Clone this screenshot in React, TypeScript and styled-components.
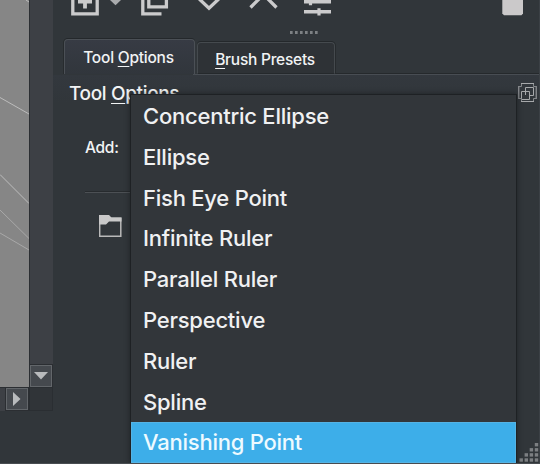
import React from "react";
import styled, { createGlobalStyle } from "styled-components";

const Global = createGlobalStyle`
  body { margin: 0; overflow: hidden; background: #31363b; }
  * { box-sizing: border-box; }
  svg { display: block; }
`;

const Window = styled.div`
  width: 540px;
  height: 464px;
  display: flex;
  position: relative;
  overflow: hidden;
  background: #31363a;
  border-bottom: 1px solid #484c50;
  color: #f1f3f4;
  font-family: Inter, "Liberation Sans", sans-serif;
`;

const CanvasColumn = styled.div`
  width: 53px;
  display: grid;
  grid-template-columns: 29px 24px;
  grid-template-rows: 387px 24px;
`;

const Canvas = styled.div`
  background: #868686;
`;

const VerticalBar = styled.div`
  background: #3d4045;
  border-left: 1px solid #2b2e32;
  display: flex;
  align-items: flex-end;
`;

const HorizontalBar = styled.div`
  background: #3d4045;
  border-top: 1px solid #2b2e32;
  display: flex;
  justify-content: flex-end;
  padding-right: 1px;
`;

const ScrollButton = styled.div`
  width: 22px;
  height: 22px;
  background: #45494e;
  border: 1px solid #62666a;
  outline: 1px solid #2b2e32;
  display: flex;
  align-items: center;
  justify-content: center;
`;

const Corner = styled.div`
  background: #303438;
  border: 1px solid #2a2e32;
`;

const Docker = styled.div`
  width: 487px;
  display: flex;
  flex-direction: column;
  border-right: 1px solid #3b4045;
`;

const Toolbar = styled.div`
  height: 30px;
`;

const Grip = styled.div`
  display: flex;
  gap: 2px;
  height: 9px;
  padding: 1px 0 0 237px;
`;

const Dot = styled.i`
  width: 3px;
  height: 3px;
  background: #7d8184;
  border-right: 1px solid #626669;
`;

const Tabs = styled.div`
  display: flex;
  align-items: flex-end;
  height: 35px;
  padding-left: 11px;
`;

const Tab = styled.div<{ $active?: boolean }>`
  width: ${(p) => (p.$active ? 131 : 138)}px;
  height: ${(p) => (p.$active ? 35 : 32)}px;
  margin-left: ${(p) => (p.$active ? 0 : 2)}px;
  padding: ${(p) => (p.$active ? 8 : 7)}px 2px 0 0;
  text-align: center;
  background: ${(p) => (p.$active ? "linear-gradient(#373b44, #31363c)" : "#2e3236")};
  border: 1px solid ${(p) => (p.$active ? "#4b5056" : "#454a4e")};
  border-bottom: ${(p) => (p.$active ? "0" : "1px solid #25292c")};
  border-radius: 4px 4px 0 0;
  box-shadow: 0 -1px 0 #24282b, ${(p) => (p.$active ? "-1px" : "1px")} 0 0 #272b2e;
  font-size: 15.5px;
  line-height: 19px;
  font-weight: 450;
  letter-spacing: ${(p) => (p.$active ? -0.23 : -0.25)}px;
  white-space: nowrap;
`;

const TabFill = styled.div`
  flex: 1;
  height: 1px;
  background: #25292c;
`;

const Key = styled.span`
  text-decoration: underline;
  text-decoration-thickness: 1px;
  text-underline-offset: 3px;
`;

const Panel = styled.div`
  flex: 1;
  display: grid;
  grid-template-rows: 37px 80px 70px 1fr;
  background: linear-gradient(#33383e, #31363a 28px);
  border-top: 1px solid #484d53;
  border-image: linear-gradient(90deg, transparent 140px, #484d53 140px) 1;
  border-left: 0;
  border-right: 0;
  border-bottom: 0;
`;

const Header = styled.div`
  display: flex;
  justify-content: space-between;
  padding: 7px 2px 0 16px;
`;

const Title = styled.div`
  font-size: 19px;
  line-height: 24px;
  font-weight: 450;
  letter-spacing: -0.35px;
  white-space: nowrap;
`;

const AddRow = styled.div`
  margin-left: 32px;
  padding-top: 26px;
  font-size: 15.5px;
  line-height: 20px;
  font-weight: 450;
  letter-spacing: -0.3px;
`;

const PresetRow = styled.div`
  margin: 0 60px 0 32px;
  padding: 22px 0 0 14px;
  border-top: 1px solid #4c5054;
  box-shadow: 0 -1px 0 #272b2e;
`;

const SizeGrip = styled.svg`
  align-self: end;
  justify-self: end;
`;

const Menu = styled.div`
  position: absolute;
  left: 130px;
  top: 94px;
  width: 387px;
  height: 370px;
  padding-top: 1px;
  background: #32363a;
  border: 1px solid #1e2124;
  box-shadow: 0 0 5px rgba(15, 18, 20, 0.55);
  display: grid;
  grid-template-rows: repeat(9, 40.8px);
`;

const MenuItem = styled.div<{ $selected?: boolean }>`
  padding-left: 12px;
  font-size: 22px;
  line-height: 40px;
  font-weight: 450;
  letter-spacing: -0.23px;
  white-space: nowrap;
  color: ${(p) => (p.$selected ? "#eefaff" : "#f0f1f2")};
  background: ${(p) => (p.$selected ? "#3daee9" : "transparent")};
  box-shadow: ${(p) => (p.$selected ? "inset 0 0 0 1px #55b3e4" : "none")};
`;

const items = [
  "Concentric Ellipse",
  "Ellipse",
  "Fish Eye Point",
  "Infinite Ruler",
  "Parallel Ruler",
  "Perspective",
  "Ruler",
  "Spline",
  "Vanishing Point",
];

const gripDots = [[3], [2, 3], [1, 2, 3], [0, 1, 2, 3]];

export default function App() {
  return (
    <>
      <Global />
      <Window>
        <CanvasColumn>
          <Canvas>
            <svg width="29" height="387" fill="none" stroke="#bcbcbc" strokeWidth="1">
              <path d="M0 97.5 29 114" />
              <path d="M0 174.5 29 203.5" />
              <path d="M0 210 29 238.5M0 233 29 250" stroke="#a8a8a8" />
              <path d="M26 0 29 2" />
            </svg>
          </Canvas>
          <VerticalBar>
            <ScrollButton>
              <svg width="14" height="8"><path d="M0 0H14L7 7.5Z" fill="#b9bbbd" /></svg>
            </ScrollButton>
          </VerticalBar>
          <HorizontalBar>
            <ScrollButton>
              <svg width="8" height="14"><path d="M0 0V14L7.5 7Z" fill="#b9bbbd" /></svg>
            </ScrollButton>
          </HorizontalBar>
          <Corner />
        </CanvasColumn>
        <Docker>
          <Toolbar>
            <svg width="486" height="20" viewBox="53 0 486 20" fill="none" stroke="#cbcbcc">
              <path d="M72.8 -4V13.8H97.2V-4" strokeWidth="3.3" />
              <path d="M78 1.7H92M85 -3V8.5" strokeWidth="3.8" />
              <path d="M110 0H121L115.5 5.2Z" fill="#a9abad" stroke="none" />
              <path d="M142.8 -3V13.8H161.5" strokeWidth="3.3" />
              <path d="M148.8 -4V6.9H166.4V-4" strokeWidth="3.3" />
              <path d="M199.3 -1 209 8.2 218.7 -1" strokeWidth="3.3" />
              <path d="M250.5 7.5 263.5 -5.5 276.5 7.5" strokeWidth="3.3" />
              <path d="M304 1.8H331M304 11.8H331" strokeWidth="3.5" />
              <path d="M310.5 0V5.2M319 8.3V15.5" strokeWidth="3.2" />
              <path d="M502.3 -2H523V13.5L521.5 15.3H504L502.3 13.5Z" fill="#cbc9ca" stroke="none" />
            </svg>
          </Toolbar>
          <Grip>{[0, 1, 2, 3, 4, 5].map((i) => <Dot key={i} />)}</Grip>
          <Tabs>
            <Tab $active>Tool <Key>O</Key>ptions</Tab>
            <Tab><Key>B</Key>rush Presets</Tab>
            <TabFill />
          </Tabs>
          <Panel>
            <Header>
              <Title>Tool <Key>O</Key>ptions</Title>
              <svg width="19" height="21" viewBox="0 0 19 21" fill="none" stroke="#a7a9ab">
                <path d="M3 1.5H16M3 19.5H16M.8 4V17M18.2 4V17" />
                <path d="M3.5 9.5H11.5V17.5H3.5ZM7.5 9V5.5H15.5V13.5H12M7.5 9.5V13" />
                <path d="M1 4.5H3.5V2M15.5 2V4.5H18M1 16.5H3.5V19M15.5 19V16.5H18" stroke="#85888b" />
              </svg>
            </Header>
            <AddRow>Add:</AddRow>
            <PresetRow>
              <svg width="23" height="23" viewBox="0 0 23 23">
                <path d="M.7 2.5V21.3H21.8V3.2H12" fill="none" stroke="#b9b9b9" strokeWidth="1.5" />
                <path d="M0 0H10L12.5 2.5H22.5V6.5H10L7 9.5H0Z" fill="#c9c9c9" />
              </svg>
            </PresetRow>
            <SizeGrip width="20" height="21" viewBox="0 0 20 21" fill="#7c7f82">
              {gripDots.map((row, y) => row.map((x) => (
                <rect key={`${x}-${y}`} x={0.5 + x * 5.1} y={1 + y * 5.1} width="3.4" height="3.4" />
              )))}
            </SizeGrip>
          </Panel>
        </Docker>
        <Menu>
          {items.map((name) => (
            <MenuItem key={name} $selected={name === "Vanishing Point"}>
              {name}
            </MenuItem>
          ))}
        </Menu>
      </Window>
    </>
  );
}
